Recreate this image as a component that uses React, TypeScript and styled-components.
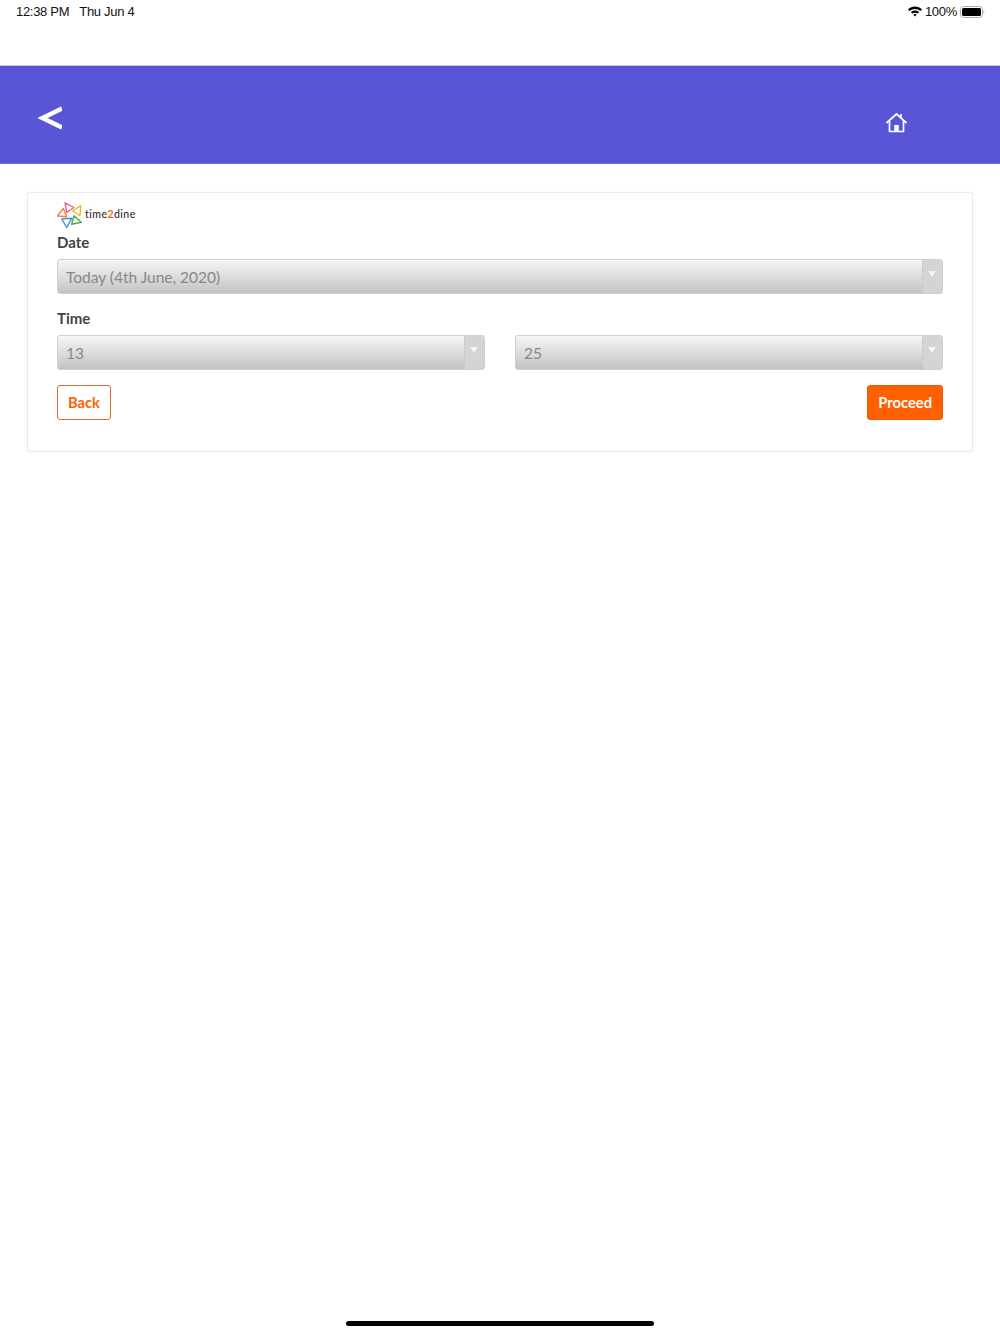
import React from "react";
import styled, { createGlobalStyle } from "styled-components";

const Global = createGlobalStyle`
  html, body { margin: 0; padding: 0; background: #fff; }
  body { font-family: Lato, "Liberation Sans", sans-serif; }
`;

const Page = styled.div`
  width: 1000px;
  height: 1334px;
  display: flex;
  flex-direction: column;
  overflow: hidden;
  background: #fff;
`;

const StatusBar = styled.div`
  height: 65px;
  padding: 4px 15px 0 16px;
  box-sizing: border-box;
  display: flex;
  justify-content: space-between;
  align-items: flex-start;
  font-family: "Liberation Sans", Arial, sans-serif;
  font-size: 13px;
  letter-spacing: -0.3px;
  line-height: 15px;
  color: #111;
`;

const StatusGroup = styled.div<{ $gap: number }>`
  display: flex;
  align-items: center;
  gap: ${(p) => p.$gap}px;
`;

const Header = styled.header`
  height: 97px;
  background: #5856d6;
  border-top: 1px solid #c9c9d8;
  border-bottom: 1px solid #6c6ae0;
  display: flex;
  align-items: flex-start;
  justify-content: space-between;
`;

const BackChevron = styled.div`
  margin: 39px 0 0 37px;
  width: 25px;
  height: 26px;
  display: flex;
`;

const HomeButton = styled.div`
  margin: 46px 93px 0 0;
  width: 21px;
  height: 21px;
  display: flex;
`;

const Card = styled.section`
  margin: 28px 27px 0;
  height: 260px;
  box-sizing: border-box;
  border: 1px solid #ebebeb;
  border-radius: 3px;
  box-shadow: 0 0 2px rgba(0, 0, 0, 0.06);
  padding: 9px 29px 0;
`;

const Logo = styled.div`
  height: 27px;
  display: flex;
  align-items: flex-start;
  gap: 3px;
`;

const LogoText = styled.span`
  font-size: 10.5px;
  font-weight: 500;
  line-height: 13px;
  color: #2b2b2b;
  letter-spacing: 0.45px;
  margin-top: 6px;
  em { font-style: normal; color: #f26a1b; font-weight: 700; }
`;

const Label = styled.div<{ $top: number }>`
  font-size: 15px;
  font-weight: 700;
  line-height: 18px;
  color: #444;
  margin-top: ${(p) => p.$top}px;
  margin-bottom: 8px;
`;

const Field = styled.div`
  height: 35px;
  box-sizing: border-box;
  border: 1px solid #cfcfcf;
  border-radius: 3px;
  background: linear-gradient(to bottom, #f6f6f6 0%, #c3c3c3 100%);
  display: flex;
  align-items: center;
  justify-content: space-between;
  flex: 1;
  overflow: hidden;
`;

const FieldText = styled.span`
  padding-left: 8px;
  font-size: 15.5px;
  color: #888;
`;

const Caret = styled.span`
  width: 20px;
  height: 100%;
  background: #d4d4d4;
  border-left: 1px solid #cacaca;
  display: flex;
  align-items: flex-start;
  justify-content: center;
  padding: 11px 1px 0 0;
  box-sizing: border-box;
  &::after {
    content: "";
    border-left: 4px solid transparent;
    border-right: 4px solid transparent;
    border-top: 6px solid #f4f4f4;
  }
`;

const TimeRow = styled.div`
  display: flex;
  gap: 30px;
`;

const Actions = styled.div`
  display: flex;
  justify-content: space-between;
  margin-top: 15px;
`;

const ActionButton = styled.button<{ $primary?: boolean }>`
  height: 35px;
  box-sizing: border-box;
  padding: 0 10px 2px;
  font-family: Lato, "Liberation Sans", sans-serif;
  font-size: 14.7px;
  font-weight: 700;
  border-radius: 3px;
  border: 1px solid ${(p) => (p.$primary ? "#e65c00" : "#e0692c")};
  background: ${(p) => (p.$primary ? "#ff6000" : "#fff")};
  color: ${(p) => (p.$primary ? "#fff" : "#ff6000")};
`;

const Spacer = styled.div`
  flex: 1;
`;

const HomeBar = styled.div`
  align-self: center;
  width: 308px;
  height: 5px;
  border-radius: 3px;
  background: #000;
  margin-bottom: 8px;
`;

const Triangle = ({ d, c }: { d: string; c: string }) => (
  <path d={d} fill="none" stroke={c} strokeWidth="1.4" strokeLinejoin="round" />
);

export default function App() {
  return (
    <Page>
      <Global />
      <StatusBar>
        <StatusGroup $gap={10}>
          <span>12:38 PM</span>
          <span>Thu Jun 4</span>
        </StatusGroup>
        <StatusGroup $gap={3}>
          <svg width="14" height="11" viewBox="0 0 14 11" aria-hidden="true">
            <path d="M0 3.4 C4 -0.4 10 -0.4 14 3.4 L12.5 5.1 C9.4 2.2 4.6 2.2 1.5 5.1 Z" fill="#000" />
            <path d="M2.8 6.1 C5.2 3.9 8.8 3.9 11.2 6.1 L9.7 7.6 C8.2 6.3 5.8 6.3 4.3 7.6 Z" fill="#000" />
            <path d="M5.2 8.5 C6.2 7.7 7.8 7.7 8.8 8.5 L7 10.6 Z" fill="#000" />
          </svg>
          <span>100%</span>
          <svg width="25" height="12" viewBox="0 0 25 12" aria-hidden="true">
            <rect x="0.5" y="0.5" width="22" height="11" rx="3" fill="none" stroke="#aaa" />
            <rect x="2" y="2" width="19" height="8" rx="1.5" fill="#000" />
            <path d="M23.6 4.2 C24.5 4.5 24.5 7.5 23.6 7.8 Z" fill="#999" />
          </svg>
        </StatusGroup>
      </StatusBar>
      <Header>
        <BackChevron>
          <svg width="25" height="26" viewBox="0 0 25 26" aria-hidden="true">
            <path d="M25 3.5 L5.5 13 L25 22.5" fill="none" stroke="#fff" strokeWidth="4.5" />
          </svg>
        </BackChevron>
        <HomeButton>
          <svg width="21" height="21" viewBox="0 0 21 21" aria-hidden="true">
            <path d="M1 10.5 L10.5 2 L20 10.5" fill="none" stroke="#fff" strokeWidth="1.7" strokeLinecap="round" strokeLinejoin="round" />
            <path d="M3.5 9 V19.5 H17.5 V9" fill="none" stroke="#fff" strokeWidth="1.7" strokeLinejoin="round" />
            <path d="M15 2 V6" fill="none" stroke="#fff" strokeWidth="1.8" />
            <rect x="8.2" y="13" width="4.6" height="6.5" fill="#fff" />
          </svg>
        </HomeButton>
      </Header>
      <Card>
        <Logo>
          <svg width="25" height="27" viewBox="0 0 25 27" aria-hidden="true">
            <Triangle d="M8 0.8 L17 5.5 L9.7 10.3 Z" c="#f2608a" />
            <Triangle d="M23.7 3.7 L15.7 9 L23 13.7 Z" c="#f5b335" />
            <Triangle d="M6.3 6.3 L0.5 14 L9.7 14.7 Z" c="#f27a3d" />
            <Triangle d="M4.7 17 L14.7 16.3 L9.7 25.3 Z" c="#3f97d9" />
            <Triangle d="M17 13.7 L24.3 20.3 L14.7 22.3 Z" c="#55a845" />
          </svg>
          <LogoText>
            time<em>2</em>dine
          </LogoText>
        </Logo>
        <Label $top={4}>Date</Label>
        <Field>
          <FieldText>Today (4th June, 2020)</FieldText>
          <Caret />
        </Field>
        <Label $top={15}>Time</Label>
        <TimeRow>
          <Field>
            <FieldText>13</FieldText>
            <Caret />
          </Field>
          <Field>
            <FieldText>25</FieldText>
            <Caret />
          </Field>
        </TimeRow>
        <Actions>
          <ActionButton>Back</ActionButton>
          <ActionButton $primary>Proceed</ActionButton>
        </Actions>
      </Card>
      <Spacer />
      <HomeBar />
    </Page>
  );
}
